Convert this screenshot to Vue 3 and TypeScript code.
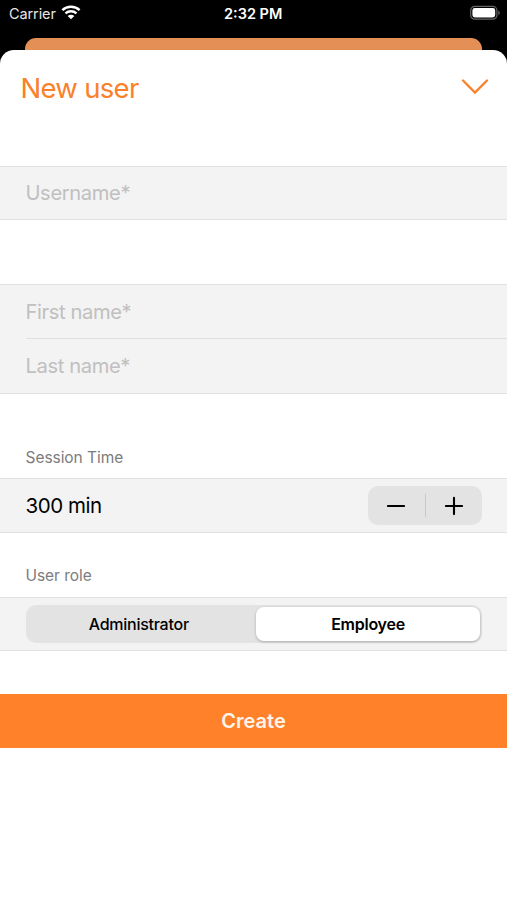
<script setup lang="ts">
import { ref } from 'vue'

type Role = 'Administrator' | 'Employee'

const username = ref('')
const firstName = ref('')
const lastName = ref('')
const minutes = ref(300)
const roles: Role[] = ['Administrator', 'Employee']
const role = ref<Role>('Employee')

function step(delta: number) {
  minutes.value = Math.max(0, minutes.value + delta)
}
</script>

<template>
  <div class="screen">
    <header class="status">
      <div class="carrier">
        <span>Carrier</span>
        <svg class="wifi" width="20" height="15" viewBox="0 0 20 15">
          <path d="M1.4 5.1C6.2.6 13.8.6 18.6 5.1" />
          <path d="M4.5 8.4C7.6 5.6 12.4 5.6 15.5 8.4" />
          <path class="dot" d="M10 14.2 6.7 10.9C8.6 9.3 11.4 9.3 13.3 10.9Z" />
        </svg>
      </div>
      <span class="clock">2:32 PM</span>
      <svg class="battery" width="31" height="16" viewBox="0 0 31 16">
        <rect x="0.7" y="1.4" width="26.2" height="12.8" rx="4" fill="none" stroke="#666" stroke-width="1.2" />
        <rect x="2.4" y="3.1" width="22.8" height="9.4" rx="2.4" fill="#fff" />
        <path d="M28.3 5.6C30.2 6.3 30.2 9.5 28.3 10.2Z" fill="#666" />
      </svg>
    </header>
    <div class="behind"></div>
    <main class="sheet">
      <div class="title-bar">
        <h1>New user</h1>
        <button class="close" aria-label="Close">
          <svg width="28" height="18" viewBox="0 0 28 18">
            <path d="M2 2.5 14 14.5 26 2.5" />
          </svg>
        </button>
      </div>

      <section class="group account">
        <input v-model="username" class="field user" placeholder="Username*" />
      </section>

      <section class="group names">
        <input v-model="firstName" class="field first" placeholder="First name*" />
        <div class="divider"></div>
        <input v-model="lastName" class="field last" placeholder="Last name*" />
      </section>

      <h2 class="session-label">Session Time</h2>
      <section class="group row">
        <span class="minutes">{{ minutes }} min</span>
        <div class="stepper">
          <button aria-label="Decrease" @click="step(-5)">
            <svg width="20" height="20" viewBox="0 0 20 20"><path d="M1.9 10H18.1" /></svg>
          </button>
          <i></i>
          <button aria-label="Increase" @click="step(5)">
            <svg width="20" height="20" viewBox="0 0 20 20"><path d="M1.9 10H18.1M10 1.9V18.1" /></svg>
          </button>
        </div>
      </section>

      <h2 class="role-label">User role</h2>
      <section class="group row roles">
        <div class="segments">
          <button
            v-for="item in roles"
            :key="item"
            :class="[item.toLowerCase(), { active: role === item }]"
            @click="role = item"
          >{{ item }}</button>
        </div>
      </section>

      <button class="create"><span>Create</span></button>
    </main>
  </div>
</template>

<style>
body {
  background: #000;
}
</style>

<style scoped>
.screen {
  height: 900px;
  display: flex;
  flex-direction: column;
  overflow: hidden;
  background: #000;
  color: #000;
  font-family: Inter, "Liberation Sans", sans-serif;
}
button {
  border: 0;
  padding: 0;
  background: none;
  color: inherit;
  font-family: inherit;
}
.status {
  flex: none;
  height: 38px;
  box-sizing: border-box;
  padding: 5px 6px 0 9px;
  display: grid;
  grid-template-columns: 215px auto 1fr;
  align-items: start;
  color: #fff;
  font-size: 14.5px;
  line-height: 18px;
}
.carrier {
  display: flex;
  gap: 5px;
  color: #e6e6e6;
  letter-spacing: -0.1px;
}
.wifi {
  fill: none;
  stroke: #fff;
  stroke-width: 2.4;
}
.wifi .dot {
  fill: #fff;
  stroke: none;
}
.clock {
  font-weight: 600;
}
.battery {
  justify-self: end;
}
.behind {
  flex: none;
  height: 12px;
  margin: 0 25px;
  border-radius: 11px 11px 0 0;
  background: #e38f56;
}
.sheet {
  flex: 1;
  display: flex;
  flex-direction: column;
  background: #fff;
  border-radius: 14px 14px 0 0;
}
.title-bar {
  height: 116px;
  box-sizing: border-box;
  padding: 20px 18px 0 20.5px;
  display: flex;
  justify-content: space-between;
  align-items: flex-start;
}
h1 {
  margin: 0;
  color: #fa8029;
  font-size: 27.5px;
  font-weight: 400;
  line-height: 36px;
  letter-spacing: -0.7px;
}
.close {
  display: flex;
  margin-top: 8px;
}
.close path {
  fill: none;
  stroke: #fa8029;
  stroke-width: 2.3;
  stroke-linecap: round;
  stroke-linejoin: miter;
}
.group {
  box-sizing: border-box;
  height: 55px;
  flex: none;
  border-top: 1px solid #e1e1e1;
  border-bottom: 1px solid #e1e1e1;
  background: #f3f3f3;
}
.account {
  height: 54px;
}
.names {
  height: 110px;
  margin-top: 64px;
}
.field {
  display: block;
  width: 100%;
  height: 53px;
  box-sizing: border-box;
  border: 0;
  padding: 0 25.5px;
  background: transparent;
  outline: none;
  font-family: inherit;
  font-size: 20.2px;
  letter-spacing: -0.4px;
}
.user {
  height: 51px;
}
.field::placeholder {
  color: #c0c0c0;
  opacity: 1;
}
.divider {
  height: 1px;
  margin-left: 26px;
  background: #dfdfdf;
}
h2 {
  margin: 0 0 0 25.5px;
  color: #7c7c7c;
  font-size: 15.5px;
  font-weight: 400;
  line-height: 20px;
  letter-spacing: -0.05px;
}
.session-label {
  padding: 54px 0 10px;
}
.role-label {
  padding: 33px 0 11px;
}
.row {
  display: flex;
  align-items: center;
  justify-content: space-between;
  padding: 0 25px 0 25.5px;
}
.roles {
  height: 54px;
}
.minutes {
  font-size: 20.5px;
  letter-spacing: -0.45px;
}
.stepper {
  width: 114px;
  height: 39px;
  display: flex;
  align-items: center;
  border-radius: 10px;
  background: #e3e3e3;
}
.stepper button {
  flex: 1;
  display: flex;
  justify-content: center;
}
.stepper path {
  fill: none;
  stroke: #000;
  stroke-width: 2.1;
  stroke-linecap: round;
}
.stepper i {
  width: 1px;
  height: 23px;
  background: #c9c9c9;
}
.segments {
  flex: 1;
  height: 38px;
  box-sizing: border-box;
  display: grid;
  grid-template-columns: 228.5px 1fr;
  padding: 2px;
  border-radius: 10px;
  background: #e3e3e3;
}
.segments button {
  border-radius: 8px;
  font-size: 16px;
  font-weight: 500;
  letter-spacing: -0.25px;
}
.segments .administrator {
  padding-right: 6px;
}
.segments button.active {
  background: #fff;
  font-weight: 600;
  box-shadow: 0 1px 3px rgba(0, 0, 0, 0.25);
}
.create {
  flex: none;
  height: 54px;
  margin-top: 42.5px;
  background: #ff822a;
  color: #fff4e9;
  font-size: 20px;
  font-weight: 600;
}
</style>
